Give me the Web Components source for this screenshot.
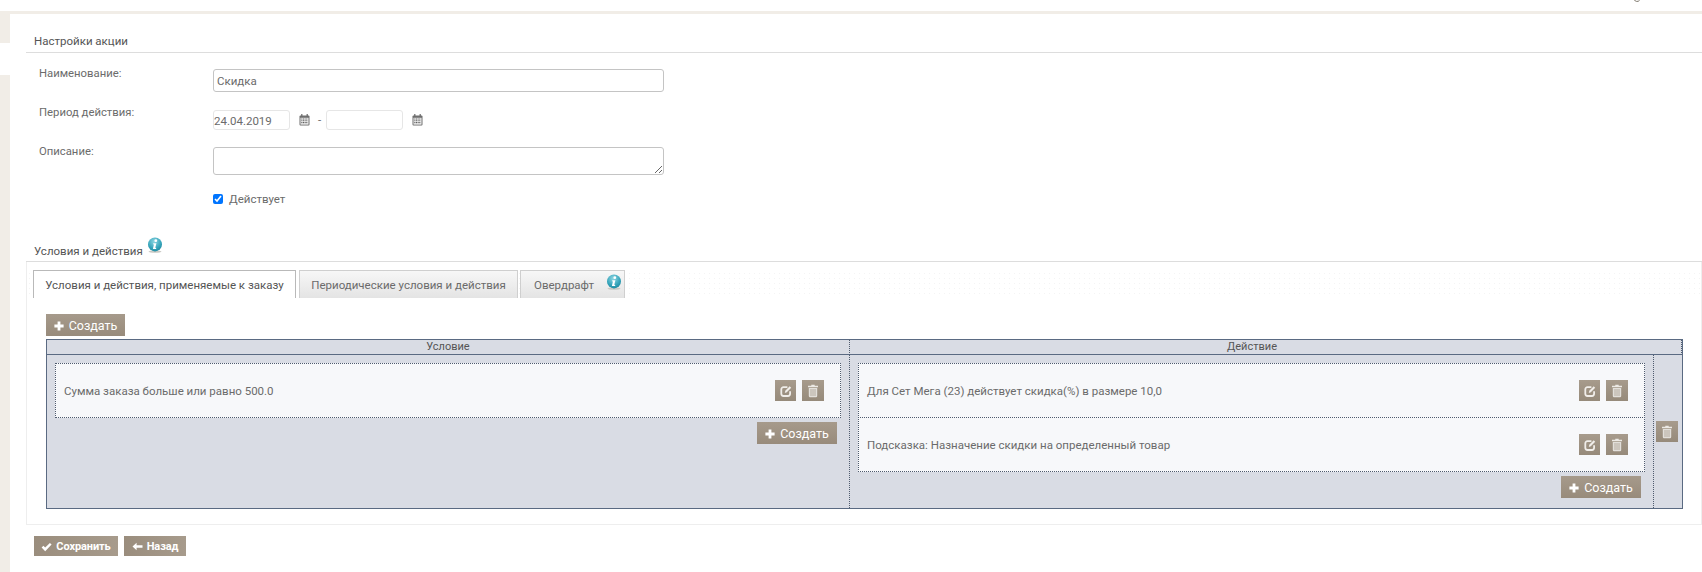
<!DOCTYPE html>
<html lang="ru">
<head>
<meta charset="utf-8">
<title>Настройки акции</title>
<style>
html,body{margin:0;padding:0;background:#fff;}
body{font:11.5px/14px Roboto,"Liberation Sans",sans-serif;color:#6b6b6b;width:1702px;height:572px;overflow:hidden;}
</style>
</head>
<body>
<promo-shell>
  <section-head>Настройки акции</section-head>
  <promo-form>
    <form-field label="Наименование:" shift="-2" gap="16"><text-box value="Скидка" style="width:451px;height:23px"></text-box></form-field>
    <form-field label="Период действия:" shift="-4" gap="18"><date-range></date-range></form-field>
    <form-field label="Описание:" shift="-2" gap="17"><note-box></note-box></form-field>
    <form-field label="" shift="0" gap="18"><check-line>Действует</check-line></form-field>
  </promo-form>
  <section-head info style="margin-top:40px">Условия и действия</section-head>
  <tab-panel>
    <ui-btn icon="plus" kind="create" style="width:79px">Создать</ui-btn>
    <rule-table>
      <rule-col slot="conditions">
        <rule-item>Сумма заказа больше или равно 500.0</rule-item>
      </rule-col>
      <rule-col slot="actions">
        <rule-item>Для Сет Мега (23) действует скидка(%) в размере 10,0</rule-item>
        <rule-item>Подсказка: Назначение скидки на определенный товар</rule-item>
      </rule-col>
    </rule-table>
  </tab-panel>
  <form-actions>
    <ui-btn icon="check" kind="save" style="width:84px">Сохранить</ui-btn>
    <ui-btn icon="back" kind="save" style="width:62px">Назад</ui-btn>
  </form-actions>
</promo-shell>

<script>
const ICONS = {
  plus:'<svg width="10" height="10" viewBox="0 0 10 10"><path d="M3.600 .4h2.800v3.200h3.200v2.800H6.400v3.200H3.600V6.400H.4V3.600h3.200z" fill="#fff"/></svg>',
  check:'<svg width="11" height="10" viewBox="0 0 11 10"><path d="M.6 5.400 2.400 3.700 4.200 5.600 8.900 .9l1.700 1.700-6.400 6.600z" fill="#fff"/></svg>',
  back:'<svg width="11" height="9" viewBox="0 0 11 9"><path d="M.5 4.500 4.600 .8v2.400h5.900v2.600H4.600v2.400z" fill="#fff"/></svg>',
  edit:'<svg width="14" height="14" viewBox="0 0 14 14"><path d="M8.400 3.200H4.500A2.200 2.200 0 0 0 2.300 5.400v4.400A2.200 2.200 0 0 0 4.500 12h4.400a2.200 2.200 0 0 0 2.200-2.200V7.200" fill="none" stroke="#f0ede9" stroke-width="1.800"/><path d="M5.800 8.900 6.300 6.700 10.700 2.300 12.200 3.800 7.800 8.300z" fill="#f0ede9"/></svg>',
  trash:'<svg width="12" height="14" viewBox="0 0 12 14"><path d="M4.300 .8h3.400v1H11V3.200H1V1.800h3.300z" fill="#ece9e4"/><path d="M1.800 4H10.200V12a1.200 1.200 0 0 1-1.200 1.200H3A1.200 1.200 0 0 1 1.800 12z" fill="#e2dfda"/><path d="M4 5v7M6 5v7M8 5v7" stroke="#aba093" stroke-width=".8"/></svg>',
  cal:'<svg width="11" height="12" viewBox="0 0 11 12"><rect x=".5" y="1.500" width="10" height="10" rx="1" fill="#6f6f6f"/><rect x="1.500" y="3.800" width="8" height="6.800" fill="#f4f4f4"/><path d="M2.800 0v2.500M8.200 0v2.500" stroke="#6a6a6a" stroke-width="1.200"/><path d="M2.300 5h6.400M2.300 6.800h6.400M2.300 8.600h6.400" stroke="#5f5f5f" stroke-width="1.100" stroke-dasharray="1.100 .55"/></svg>',
  info:'<svg width="16" height="16" viewBox="0 0 16 16"><defs><radialGradient id="g" cx=".45" cy=".3" r=".8"><stop offset="0" stop-color="#8fd6e2"/><stop offset=".6" stop-color="#35a4ba"/><stop offset="1" stop-color="#1b8198"/></radialGradient></defs><ellipse cx="8" cy="14.600" rx="6.500" ry="1.200" fill="#c9c9c4"/><circle cx="8" cy="7.400" r="7" fill="url(#g)"/><circle cx="8.800" cy="3.700" r="1.400" fill="#fff"/><path d="M6.300 6.300h3.100L8.300 10.800l1 .1-.3 1H5.900l1-4.500-.8-.1z" fill="#fff"/></svg>'
};
function define(name, css, html, extra){
  const tpl=document.createElement('template');
  tpl.innerHTML='<style>'+css+'</style>'+html;
  customElements.define(name,class extends HTMLElement{
    constructor(){super();this.attachShadow({mode:'open'}).appendChild(tpl.content.cloneNode(true));}
    connectedCallback(){extra&&extra(this,this.shadowRoot);}
  });
}
define('promo-shell',`
  :host{display:block;width:1702px;height:572px;overflow:hidden}
  .top{height:11px;display:flex;justify-content:flex-end;padding-right:62px}
  .top svg{display:block}
  .band{height:3px;background:#f1ede7}
  .main{display:flex;height:558px}
  .strip{width:10px;flex:none;display:flex;flex-direction:column}
  .strip i{display:block;background:#f1ede7}
  .strip i:first-child{height:29px}
  .strip b{display:block;height:32px}
  .strip i:last-child{flex:1}
  .content{flex:1;padding-left:16px;min-width:0}
`,`<div class="top"><svg width="6" height="2" viewBox="0 0 6 2"><path d="M.5 0C1 1.600 4 2 5.500 .5" fill="none" stroke="#7b7468" stroke-width="1"/></svg></div>
<div class="band"></div>
<div class="main"><div class="strip"><i></i><b></b><i></i></div><div class="content"><slot></slot></div></div>`);

define('section-head',`
  :host{display:block;border-bottom:1px solid #ddd;padding:20px 0 4px 8px;font-size:11.5px;line-height:14px;color:#555}
  .row{display:flex;align-items:flex-start}
  .i{display:none;margin:-7px 0 0 4px;height:16px}
  :host([info]) .i{display:block}
  :host([info]){padding-top:0;padding-bottom:3px}
`,`<div class="row"><slot></slot><span class="i">${ICONS.info}</span></div>`);

define('promo-form',`:host{display:block;padding-left:13px}`,`<slot></slot>`);

define('form-field',`
  :host{display:flex;align-items:flex-start}
  .l{width:174px;flex:none;color:#6b6b6b;font-size:11.3px}
`,`<div class="l"></div><div class="c"><slot></slot></div>`,(el,r)=>{
  r.querySelector('.l').textContent=el.getAttribute('label');
  r.querySelector('.l').style.marginTop=el.getAttribute('shift')+'px';
  el.style.marginTop=el.getAttribute('gap')+'px';
});

define('text-box',`
  :host{display:block;box-sizing:border-box;border:1px solid #c4c4c4;border-radius:3px;background:#fff}
  input{all:unset;box-sizing:border-box;display:block;width:100%;height:100%;padding:1px 3px 0;font:11.5px Roboto,sans-serif;color:#6b6b6b}
`,`<input type="text">`,(el,r)=>{r.querySelector('input').value=el.getAttribute('value')||'';});

define('date-range',`
  :host{display:flex;align-items:center;height:20px}
  .d{box-sizing:border-box;width:77px;height:20px;border:1px solid #e6e6e6;border-radius:3px;font:11.5px/18px Roboto,sans-serif;color:#6b6b6b;padding:1px 0 0 0;display:block;outline:none;background:#fff}
  svg{display:block;margin:0 0 0 9px}
  .dash{width:8px;margin:0 0 0 8px;font-size:11.5px;color:#6b6b6b}
`,`<input class="d" value="24.04.2019">${ICONS.cal}<span class="dash">-</span><input class="d" value="">${ICONS.cal}`);

define('note-box',`
  :host{display:block;width:451px;height:28px}
  textarea{box-sizing:border-box;display:block;width:451px;height:28px;border:1px solid #c4c4c4;border-radius:3px;margin:0;padding:2px;outline:none;background:#fff;font:11.5px Roboto,sans-serif}
`,`<textarea></textarea>`);

define('check-line',`
  :host{display:flex;align-items:center;height:11px;gap:6px}
  input{width:10px;height:10px;margin:0;accent-color:#0075ff}
  span{color:#6b6b6b;margin-top:1px}
`,`<input type="checkbox" checked><span><slot></slot></span>`);

define('ui-btn',`
  :host{display:inline-flex;align-items:center;justify-content:center;box-sizing:border-box;height:22px;background:linear-gradient(#a69a8b,#988b7b);color:#fff;font-size:12.5px;white-space:nowrap;width:80px;gap:5px}
  :host([kind=create]){padding-top:1px}
  :host([kind=save]){height:20px;padding-top:1px;font-weight:700;font-size:11px;letter-spacing:-.1px;gap:4px;background:linear-gradient(90deg,#9a8d7d,#a79b8c)}
  :host([kind=tool]){width:21px;height:21px;background:linear-gradient(#a79b8c,#968a7a)}
  :host([kind=tool][wide]){width:22px}
  svg{display:block}
`,`<span class="i"></span><slot></slot>`,(el,r)=>{
  r.querySelector('.i').innerHTML=ICONS[el.getAttribute('icon')]||'';
});

define('tab-panel',`
  :host{display:block;border:1px solid #eee;border-top:0;height:263px;box-sizing:border-box;padding-top:8px}
  .tabs{display:flex;height:28px;padding-left:6px;
    background-image:radial-gradient(circle,#f4f4f4 .7px,transparent .8px);background-size:5px 5px;background-position:0 1px}
  .tab{box-sizing:border-box;height:28px;border:1px solid #cfcfcf;border-bottom:0;background:linear-gradient(#f7f7f7,#e4e4e4);display:flex;align-items:center;justify-content:center;color:#6b6b6b;white-space:nowrap;font-size:11.5px}
  .a{width:263px;background:#fff;border-color:#b9b9b9;color:#555}
  .b{width:219px;margin-left:3px}
  .c{width:105px;margin-left:2px;justify-content:flex-start;padding-left:13px;position:relative}
  .c svg{position:absolute;left:85px;top:3px}
  .body{padding:16px 18px 0 19px}
  ::slotted(ui-btn){display:flex}
`,`<div class="tabs"><div class="tab a">Условия и действия, применяемые к заказу</div><div class="tab b">Периодические условия и действия</div><div class="tab c">Овердрафт${ICONS.info}</div></div>
<div class="body"><slot></slot></div>`);

define('rule-table',`
  :host{display:grid;grid-template-columns:803px 804px 28px;grid-template-rows:15px 153px;box-sizing:border-box;width:1637px;height:170px;margin-top:3px;border:1px solid #5a6a82;background:#d9dce4}
  .h{border-bottom:1px solid #5a6a82;text-align:center;font-size:11px;line-height:14px;color:#555;border-right:1px dotted #4f5b6e}
  .h:nth-child(3){border-right:0}
  .c{border-right:1px dotted #4f5b6e;min-width:0}
  .last{border-right:0;display:flex;align-items:center;padding-left:2px}
`,`<div class="h">Условие</div><div class="h">Действие</div><div class="h"></div>
<div class="c"><slot name="conditions"></slot></div><div class="c"><slot name="actions"></slot></div>
<div class="c last"><ui-btn kind="tool" wide icon="trash"></ui-btn></div>`);

define('rule-col',`
  :host{display:block;padding:8px 4px 0 8px}
  .f{display:flex;justify-content:flex-end;padding:4px 0 0;margin-right:8px}
  .box{margin-right:4px}
`,`<div class="box"><slot></slot></div><div class="f"><ui-btn icon="plus" kind="create">Создать</ui-btn></div>`);

define('rule-item',`
  :host{display:flex;align-items:center;box-sizing:border-box;height:55px;border:1px dotted #4f5b6e;background:#f7f8fa;padding:0 16px 0 8px;color:#6b6b6b}
  :host(:not(:first-child)){margin-top:-1px}
  .t{flex:1;min-width:0;padding-top:1px}
  .a{display:flex;gap:6px}
`,`<span class="t"><slot></slot></span><span class="a"><ui-btn kind="tool" icon="edit"></ui-btn><ui-btn kind="tool" wide icon="trash"></ui-btn></span>`);

define('form-actions',`
  :host{display:flex;gap:6px;margin:11px 0 0 8px}
`,`<slot></slot>`);
</script>
</body>
</html>
